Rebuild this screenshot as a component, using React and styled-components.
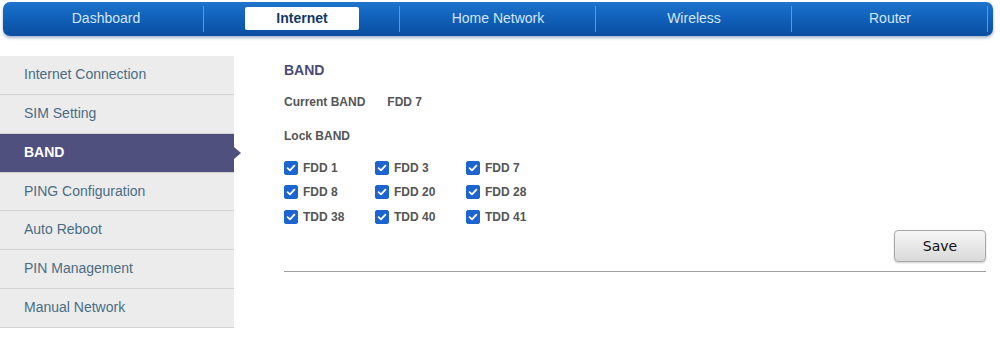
import React, { useState } from 'react';
import styled, { createGlobalStyle } from 'styled-components';

const tabs = ['Dashboard', 'Internet', 'Home Network', 'Wireless', 'Router'];
const menu = [
    'Internet Connection',
    'SIM Setting',
    'BAND',
    'PING Configuration',
    'Auto Reboot',
    'PIN Management',
    'Manual Network',
];
const bandRows = [
    ['FDD 1', 'FDD 3', 'FDD 7'],
    ['FDD 8', 'FDD 20', 'FDD 28'],
    ['TDD 38', 'TDD 40', 'TDD 41'],
];

const CheckIcon = () => (
    <svg width="10" height="10" viewBox="0 0 10 10">
        <path d="M1.6 5.2 L4 7.4 L8.4 2.6" fill="none" stroke="#fff" strokeWidth="1.8" strokeLinecap="round" strokeLinejoin="round" />
    </svg>
);

const App = () => {
    const [checked, setChecked] = useState(() => bandRows.flat());

    const toggle = (band) => {
        setChecked((prev) => (prev.includes(band) ? prev.filter((b) => b !== band) : [...prev, band]));
    };

    return (
        <>
            <GlobalStyle />
            <Page>
                <NavBar>
                    {tabs.map((tab) => (
                        <NavItem key={tab}>
                            <NavLabel $active={tab === 'Internet'}>{tab}</NavLabel>
                        </NavItem>
                    ))}
                </NavBar>
                <Main>
                    <SideMenu>
                        {menu.map((item) => (
                            <MenuItem key={item} $active={item === 'BAND'}>
                                {item}
                            </MenuItem>
                        ))}
                    </SideMenu>
                    <Content>
                        <Heading>BAND</Heading>
                        <InfoRow>
                            <Label>Current BAND</Label>
                            <Label>FDD 7</Label>
                        </InfoRow>
                        <Label>Lock BAND</Label>
                        <BandGrid>
                            {bandRows.flat().map((band) => (
                                <BandOption key={band} onClick={() => toggle(band)}>
                                    <Box $on={checked.includes(band)}>{checked.includes(band) && <CheckIcon />}</Box>
                                    {band}
                                </BandOption>
                            ))}
                        </BandGrid>
                        <Actions>
                            <SaveButton>Save</SaveButton>
                        </Actions>
                        <Divider />
                    </Content>
                </Main>
            </Page>
        </>
    );
};

const GlobalStyle = createGlobalStyle`
  body {
    margin: 0;
    background: #fff;
    font-family: "Liberation Sans", Arial, sans-serif;
  }
`;

const Page = styled.div`
  width: 1000px;
  padding-top: 2px;
`;

const NavBar = styled.div`
  display: flex;
  margin-left: 3px;
  width: 990px;
  height: 34px;
  padding: 0 5px;
  box-sizing: border-box;
  border-radius: 7px;
  background: linear-gradient(to bottom, #1e74cc 0%, #0f5fb8 50%, #0b4f9f 100%);
  box-shadow: 0 2px 3px rgba(60, 90, 140, 0.45);
`;

const NavItem = styled.div`
  width: 196px;
  display: flex;
  align-items: center;
  justify-content: center;
  position: relative;
  &::after {
    content: '';
    position: absolute;
    right: 0;
    top: 4px;
    bottom: 4px;
    width: 1px;
    background: #5a98dc;
  }
`;

const NavLabel = styled.span`
  display: flex;
  align-items: center;
  justify-content: center;
  font-size: 14px;
  width: ${(p) => (p.$active ? '114px' : 'auto')};
  height: 23px;
  margin-top: -2px;
  border-radius: 2px;
  background: ${(p) => (p.$active ? '#fff' : 'transparent')};
  color: ${(p) => (p.$active ? '#123a66' : '#d3e5f8')};
  font-weight: ${(p) => (p.$active ? 'bold' : 'normal')};
`;

const Main = styled.div`
  display: flex;
  gap: 50px;
  margin-top: 20px;
`;

const SideMenu = styled.div`
  width: 234px;
  flex-shrink: 0;
  background: #ececec;
`;

const MenuItem = styled.div`
  position: relative;
  height: 37.85px;
  line-height: 37.85px;
  padding-left: 24px;
  font-size: 14px;
  border-bottom: 1px solid #d2d2d2;
  color: ${(p) => (p.$active ? '#fff' : '#4a6c84')};
  background: ${(p) => (p.$active ? '#50507f' : 'transparent')};
  font-weight: ${(p) => (p.$active ? 'bold' : 'normal')};
  &::after {
    content: '';
    display: ${(p) => (p.$active ? 'block' : 'none')};
    position: absolute;
    right: -7px;
    top: 13px;
    border-top: 6px solid transparent;
    border-bottom: 6px solid transparent;
    border-left: 7px solid #50507f;
  }
`;

const Content = styled.div`
  width: 702px;
  padding-top: 6px;
`;

const Heading = styled.div`
  font-size: 14px;
  font-weight: bold;
  color: #4a4a78;
  line-height: 16px;
`;

const InfoRow = styled.div`
  display: flex;
  gap: 22px;
  margin: 17px 0 20px;
`;

const Label = styled.div`
  font-size: 12px;
  font-weight: bold;
  color: #555;
  line-height: 14px;
`;

const BandGrid = styled.div`
  display: grid;
  grid-template-columns: repeat(3, 91px);
  row-gap: 9.5px;
  margin-top: 17px;
`;

const BandOption = styled.label`
  display: flex;
  align-items: center;
  gap: 5px;
  font-size: 12px;
  font-weight: bold;
  color: #555;
  height: 15px;
  cursor: pointer;
`;

const Box = styled.span`
  width: 14px;
  height: 14px;
  border-radius: 2px;
  display: flex;
  align-items: center;
  justify-content: center;
  box-sizing: border-box;
  background: ${(p) => (p.$on ? '#1c64d0' : '#fff')};
  border: 1px solid ${(p) => (p.$on ? '#1c64d0' : '#888')};
`;

const Actions = styled.div`
  display: flex;
  justify-content: flex-end;
  margin-top: 6px;
`;

const SaveButton = styled.button`
  width: 92px;
  height: 32px;
  font-family: "DejaVu Sans", Verdana, sans-serif;
  font-size: 14px;
  color: #111;
  border: 1px solid #a8a8a8;
  border-radius: 4px;
  background: linear-gradient(to bottom, #f6f6f6, #d9d9d9);
  box-shadow: 0 1px 2px rgba(0, 0, 0, 0.2);
  cursor: pointer;
`;

const Divider = styled.hr`
  margin: 9px 0 0;
  border: none;
  border-top: 1px solid #a0a0a0;
`;

export default App;
